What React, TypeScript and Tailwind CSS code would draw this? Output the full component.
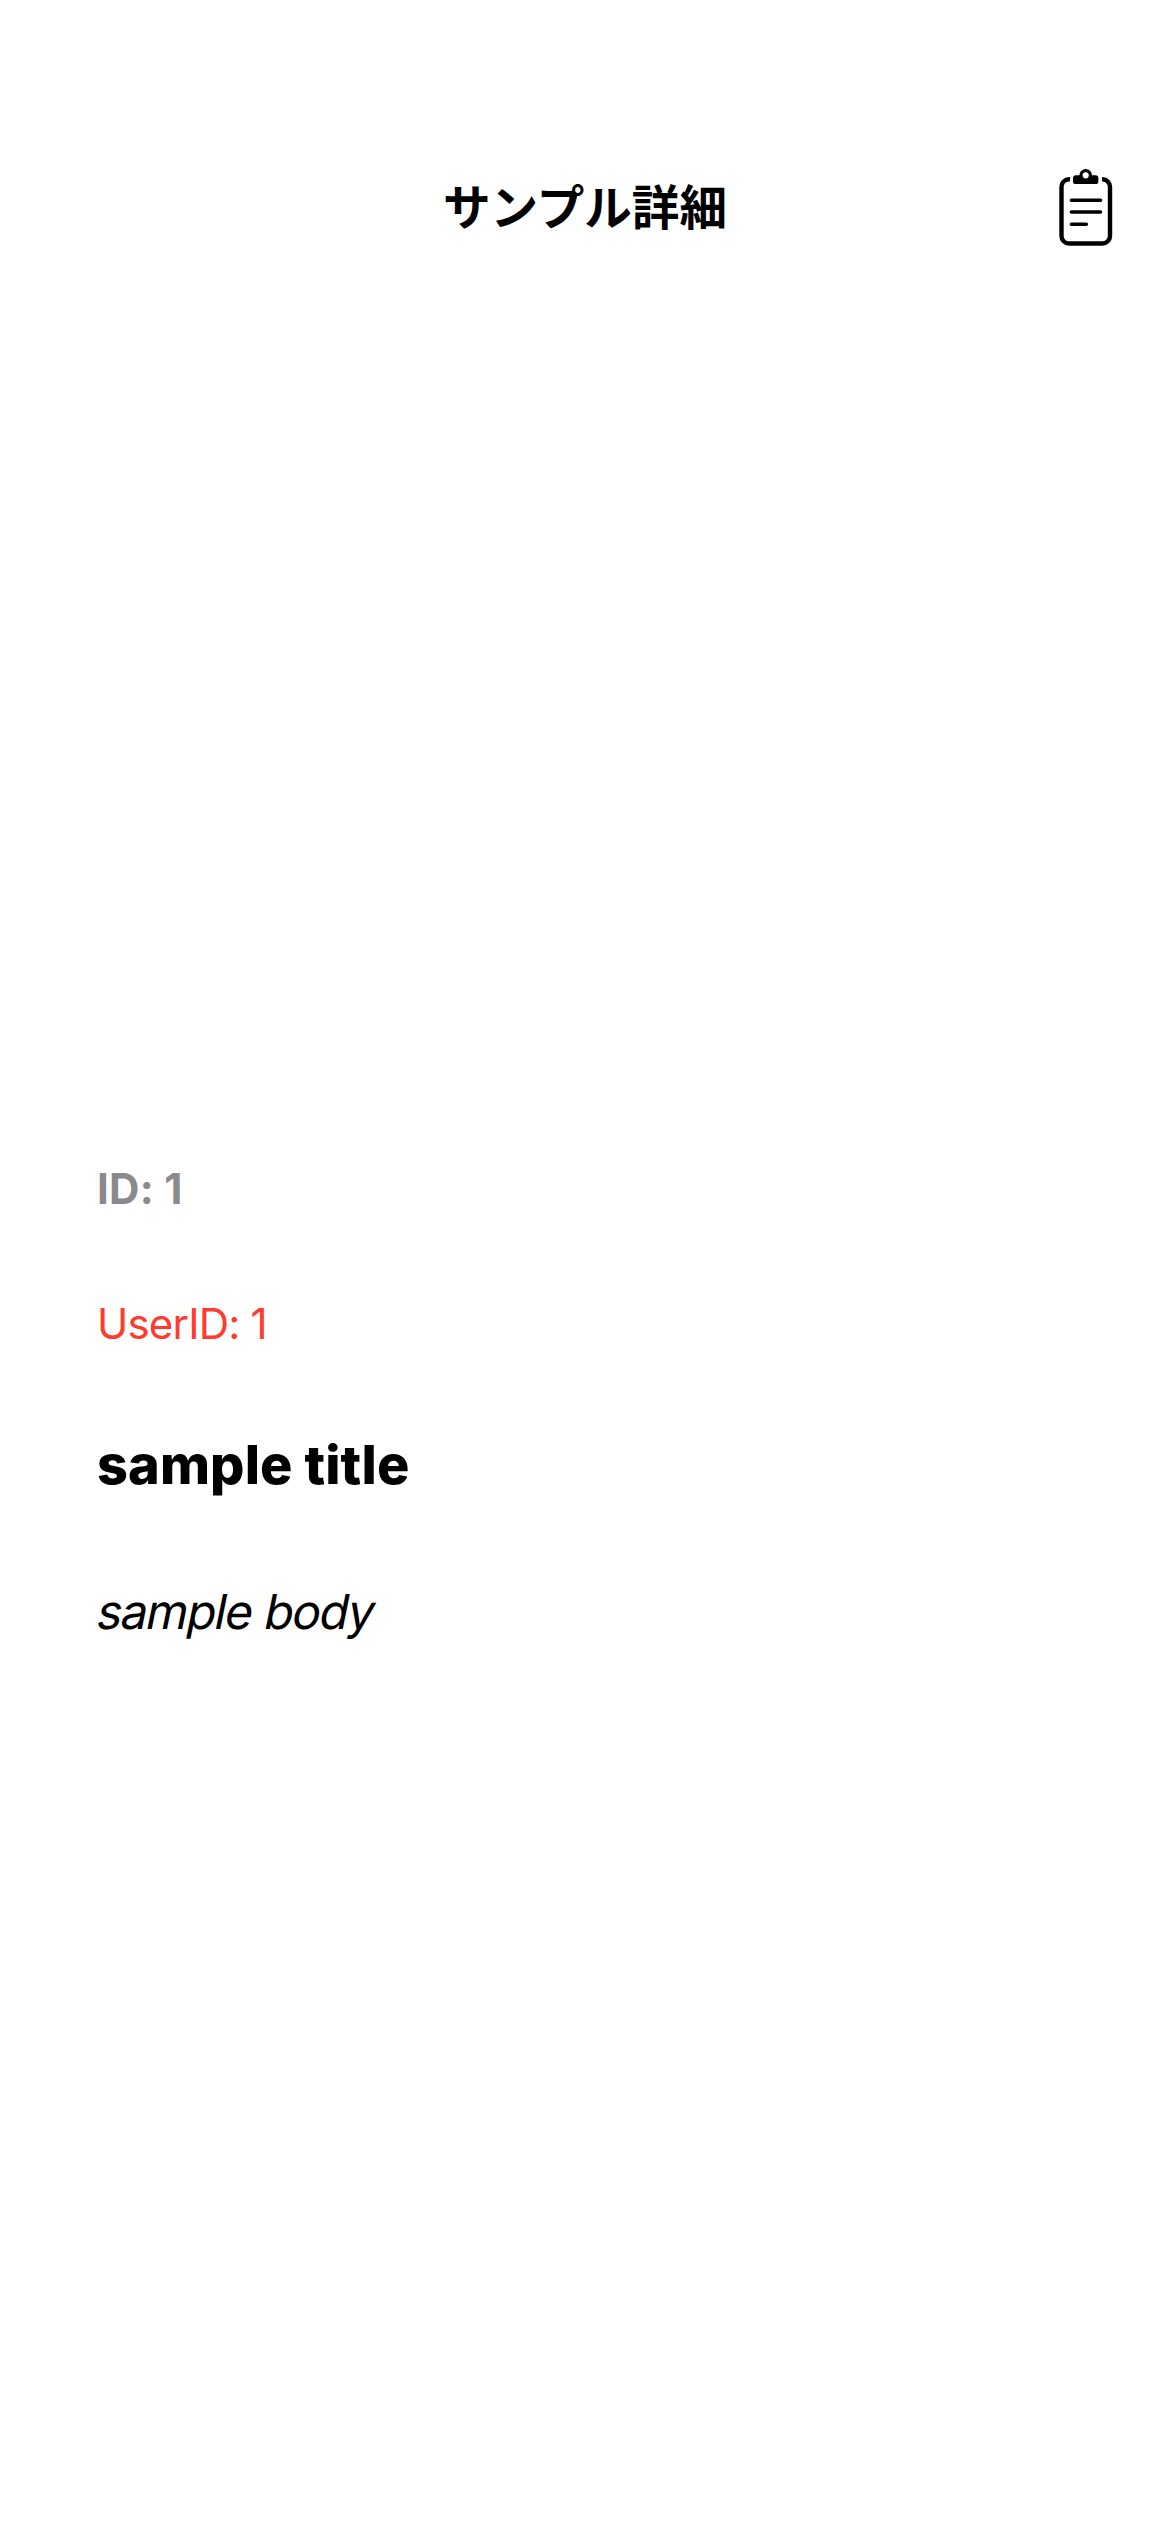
function ClipboardIcon() {
  return (
    <svg className="h-[78px] w-[54px]" viewBox="0 0 54 78" fill="none" stroke="currentColor" aria-hidden="true">
      <path
        d="M11 11.3H10A7.5 7.5 0 0 0 2.5 18.8V68A7.5 7.5 0 0 0 10 75.5H43.5A7.5 7.5 0 0 0 51 68V18.8A7.5 7.5 0 0 0 43.5 11.3H43"
        strokeWidth="4.4"
      />
      <path d="M12.3 32.3H41.6M12.3 44H41.6M12.3 56.3H27.4" strokeWidth="3.4" strokeLinecap="round" />
      <path
        fill="currentColor"
        stroke="none"
        fillRule="evenodd"
        d="M20.5 7.2A6.2 6.2 0 0 1 32.9 7.2H36.5A2.9 2.9 0 0 1 39.4 10.1V13.2A2.9 2.9 0 0 1 36.5 16.1H16.9A2.9 2.9 0 0 1 14 13.2V10.1A2.9 2.9 0 0 1 16.9 7.2ZM26.7 4.2A3.1 3.1 0 1 0 26.7 10.4A3.1 3.1 0 1 0 26.7 4.2Z"
      />
    </svg>
  );
}

export default function App() {
  return (
    <main className="flex h-[2532px] w-[1170px] flex-col bg-white font-['Inter','Noto_Sans_CJK_JP',sans-serif] text-black">
      <header className="mt-[141px] grid h-[132px] grid-cols-[1fr_auto_1fr] items-center px-[57px]">
        <h1 className="col-start-2 pt-[2px] text-[47.6px] leading-none font-bold">サンプル詳細</h1>
        <button type="button" aria-label="Clipboard" className="justify-self-end">
          <ClipboardIcon />
        </button>
      </header>
      <section className="flex flex-col items-start pt-[880px] pl-[97px]">
        <p className="text-[42px] leading-[72px] font-bold tracking-[0.3px] text-[#8a8a8e]">ID: 1</p>
        <p className="mt-[63px] text-[42px] leading-[72px] tracking-[-0.8px] text-[#ff3b30]">UserID: 1</p>
        <p className="mt-[65px] text-[54px] leading-[80px] font-extrabold tracking-[0.1px]">sample title</p>
        <p className="mt-[67px] -skew-x-[11.5deg] pl-px text-[48px] leading-[80px] tracking-[-1.5px] [word-spacing:1px]">
          sample body
        </p>
      </section>
    </main>
  );
}
